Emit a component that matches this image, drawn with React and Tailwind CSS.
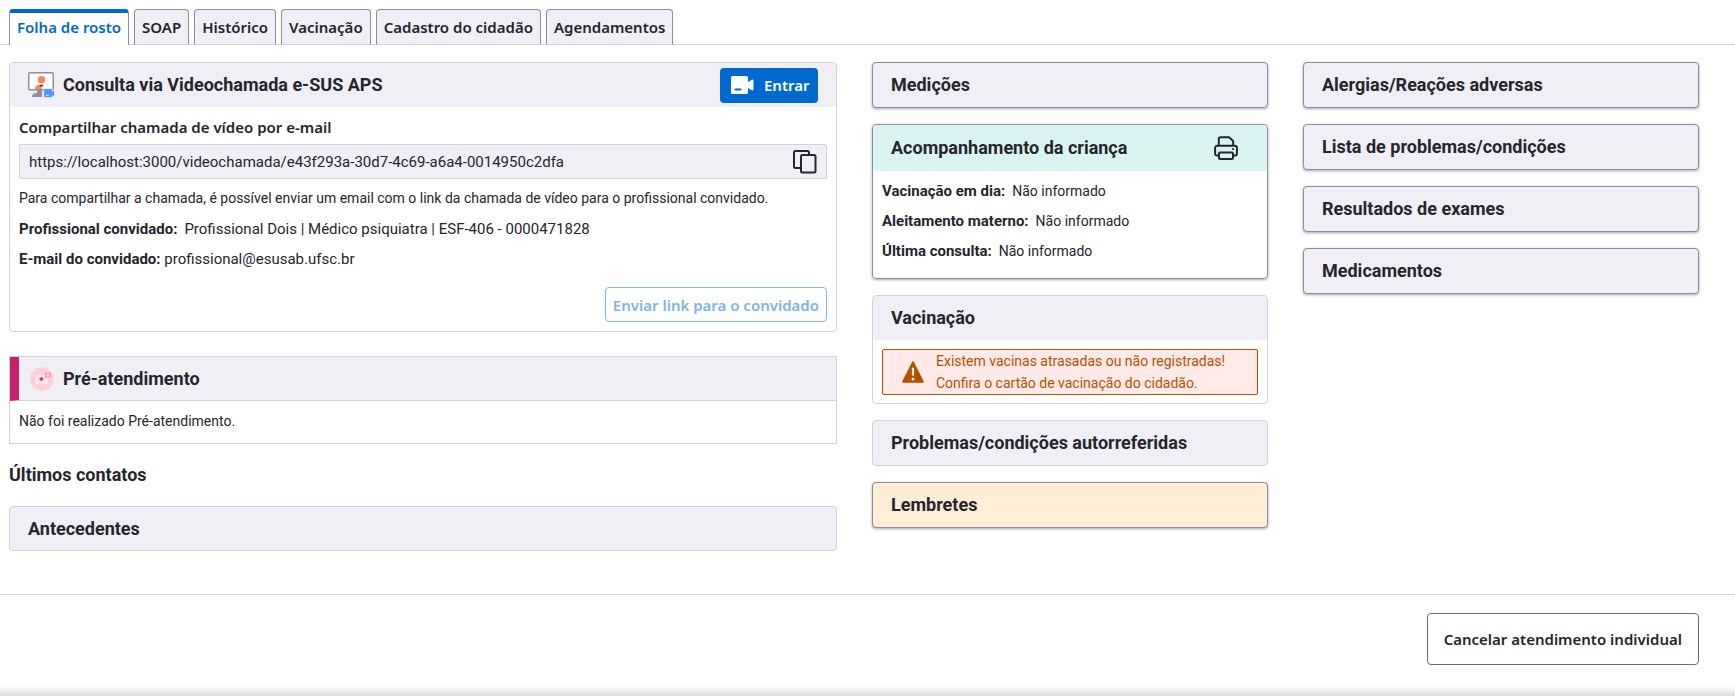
import React from "react";

const tabs = ["Folha de rosto", "SOAP", "Histórico", "Vacinação", "Cadastro do cidadão", "Agendamentos"];

const rightCards = ["Alergias/Reações adversas", "Lista de problemas/condições", "Resultados de exames", "Medicamentos"];

const childInfo = [
  ["Vacinação em dia:", "Não informado"],
  ["Aleitamento materno:", "Não informado"],
  ["Última consulta:", "Não informado"],
];

function Title({ children }) {
  return <h2 className="font-[Roboto,sans-serif] text-[18px] leading-6 font-bold">{children}</h2>;
}

function CardButton({ children, className = "bg-[#f0eff5]" }) {
  return (
    <button
      type="button"
      className={`flex h-[46px] items-center rounded border border-[#8b8ba3] px-[18px] text-left shadow-[0_1px_3px_rgba(0,0,0,0.35)] ${className}`}
    >
      <span className="font-[Roboto,sans-serif] text-[18px] leading-6 font-bold">{children}</span>
    </button>
  );
}

function MonitorIcon() {
  return (
    <svg width="26" height="26" viewBox="0 0 26 26" aria-hidden="true">
      <path d="M9 18h5v7H4c0-2.800 1.500-4 5-4z" fill="#8f8fa3" />
      <rect x="0.750" y="0.750" width="24.500" height="17" rx="1" fill="#fff" stroke="#8f8fa3" strokeWidth="1.500" />
      <circle cx="13.500" cy="7.800" r="3.700" fill="#ff8551" />
      <path d="M7 17c0-2.700 2-4.200 4.700-4.200h2v4.200z" fill="#ff8551" />
      <path d="M11.500 12.800h3.700v1.800h-3z" fill="#5b3a2c" />
      <rect x="15.800" y="16.700" width="8.400" height="8.800" rx="1.200" fill="#4a90ff" stroke="#fff" strokeWidth="0.500" />
      <path d="M23.500 20l2.500-1.200v5.400L23.500 23z" fill="#4a90ff" />
      <path d="M18 23.300h3" stroke="#fff" strokeWidth="0.900" />
    </svg>
  );
}

function CameraIcon() {
  return (
    <svg width="23" height="18" viewBox="0 0 23 18" aria-hidden="true">
      <path fill="#fff" fillRule="evenodd" d="M1.500 0h14A1.500 1.500 0 0 1 17 1.500V6l3.800-2.200c.8-.5 1.700 0 1.700.9v8.600c0 .9-.9 1.400-1.700.9L17 12v4.500a1.500 1.500 0 0 1-1.500 1.500h-14A1.500 1.500 0 0 1 0 16.500v-15A1.500 1.500 0 0 1 1.500 0zM4.500 12.500a1 1 0 0 0 0 2h5a1 1 0 0 0 0-2z" />
    </svg>
  );
}

function CopyIcon() {
  return (
    <svg width="24" height="24" viewBox="0 0 24 24" fill="none" stroke="#25252d" strokeWidth="2" strokeLinejoin="round" aria-hidden="true">
      <path d="M16 5V2.500A1.500 1.500 0 0 0 14.500 1h-12A1.500 1.500 0 0 0 1 2.500v14A1.500 1.500 0 0 0 2.500 18H7" />
      <rect x="8" y="5" width="14.500" height="17.500" rx="1.500" />
    </svg>
  );
}

function PrinterIcon() {
  return (
    <svg width="24" height="24" viewBox="0 0 24 24" fill="none" stroke="#25252d" strokeWidth="2" strokeLinejoin="round" aria-hidden="true">
      <path d="M4.800 9.500V3A1.800 1.800 0 0 1 6.600 1.200h8.400L19.200 5v4.500" />
      <path d="M5 19.500H2.800A1.700 1.700 0 0 1 1.100 17.800V12a2.300 2.300 0 0 1 2.300-2.300h17.200a2.300 2.300 0 0 1 2.300 2.300v5.800a1.700 1.700 0 0 1-1.700 1.700H19" />
      <rect x="5" y="16.500" width="14" height="6.500" rx="1" />
      <circle cx="19" cy="13" r="1.100" fill="#25252d" stroke="none" />
    </svg>
  );
}

function KitIcon() {
  return (
    <svg width="24" height="24" viewBox="0 0 24 24" aria-hidden="true">
      <circle cx="12" cy="12" r="11.800" fill="#ffcfda" />
      <rect x="5" y="8" width="13" height="9" rx="1.200" fill="#ffe6ec" />
      <path d="M11.400 10v4M9.400 12h4" stroke="#c81e6e" strokeWidth="1.400" />
      <path d="M15 5.500h6v5h-4.500L15 12z" fill="#ff9cba" />
      <path d="M18 6.700v2.800M16.600 8.100h2.800" stroke="#fff" strokeWidth="0.900" />
    </svg>
  );
}

function WarningIcon() {
  return (
    <svg width="22" height="22" viewBox="0 0 22 22" aria-hidden="true">
      <path d="M11 .3c.4 0 .7.200.9.600l9.900 19.500c.3.700-.1 1.400-.9 1.400H1.100c-.8 0-1.200-.7-.9-1.400L10.100.9c.2-.4.5-.6.9-.6z" fill="#b35000" />
      <path d="M11 7.500v6.200" stroke="#ffeae7" strokeWidth="2.200" strokeLinecap="round" />
      <circle cx="11" cy="18" r="1.500" fill="#ffeae7" />
    </svg>
  );
}

export default function App() {
  return (
    <div className="flex min-h-screen flex-col bg-white font-[Roboto,sans-serif] text-[14px] leading-5 text-[#25252d]">
      <nav className="border-b border-[#d2d2de] pt-[9px] pl-[9px]">
        <div role="tablist" className="-mb-px flex gap-[5px] font-['Noto_Sans',sans-serif] text-[15px] leading-[18px] font-semibold">
          {tabs.map((tab, i) => (
            <button
              key={tab}
              type="button"
              role="tab"
              aria-selected={i === 0}
              className={
                i === 0
                  ? "h-9 rounded-t border-x border-t-4 border-x-[#8b8ba3] border-t-[#0069d0] bg-white px-[7px] pb-1 text-[#0069d0]"
                  : "h-9 rounded-t border border-[#8b8ba3] border-b-[#d2d2de] bg-[#f0eff5] px-[7px]"
              }
            >
              {tab}
            </button>
          ))}
        </div>
      </nav>

      <main className="grid grid-cols-[828fr_396fr_396fr] items-start gap-[35px] pt-[17px] pr-9 pl-[9px]">
        <div className="flex min-w-0 flex-col">
          <section className="rounded border border-[#d2d2de]">
            <header className="flex h-11 items-center rounded bg-[#f0eff5] px-[18px]">
              <MonitorIcon />
              <div className="ml-[9px] grow">
                <Title>Consulta via Videochamada e-SUS APS</Title>
              </div>
              <button
                type="button"
                className="flex h-[35px] w-[98px] items-center gap-[10px] rounded bg-[#0069d0] pl-[11px] font-['Noto_Sans',sans-serif] text-[15px] font-semibold text-white"
              >
                <CameraIcon />
                Entrar
              </button>
            </header>
            <div className="px-[9px] pt-[10px] pb-[9px]">
              <label htmlFor="link" className="block font-['Noto_Sans',sans-serif] text-[15px] font-semibold">
                Compartilhar chamada de vídeo por e-mail
              </label>
              <div className="mt-[7px] flex h-[35px] items-center rounded-xs border border-[#d2d2de] bg-[#f0eff5] px-[9px]">
                <input
                  id="link"
                  readOnly
                  value="https://localhost:3000/videochamada/e43f293a-30d7-4c69-a6a4-0014950c2dfa"
                  className="min-w-0 grow bg-transparent text-[15px] outline-none"
                />
                <button type="button" aria-label="Copiar link">
                  <CopyIcon />
                </button>
              </div>
              <p className="mt-[9px]">
                Para compartilhar a chamada, é possível enviar um email com o link da chamada de vídeo para o profissional convidado.
              </p>
              <p className="mt-[11px] text-[15px]">
                <strong className="mr-[7px]">Profissional convidado:</strong>Profissional Dois | Médico psiquiatra | ESF-406 - 0000471828
              </p>
              <p className="mt-[10px] text-[15px]">
                <strong>E-mail do convidado:</strong> profissional@esusab.ufsc.br
              </p>
              <div className="mt-[18px] flex justify-end">
                <button
                  type="button"
                  disabled
                  className="h-[35px] rounded border border-[#7fb4e8] px-[7px] font-['Noto_Sans',sans-serif] text-[15px] font-semibold text-[#7fb4e8]"
                >
                  Enviar link para o convidado
                </button>
              </div>
            </div>
          </section>

          <section className="mt-6 border border-[#d2d2de]">
            <header className="flex h-11 items-center border-b border-l-[9px] border-b-[#d2d2de] border-l-[#c81e6e] bg-[#f0eff5] pl-[11px]">
              <KitIcon />
              <div className="ml-[9px]">
                <Title>Pré-atendimento</Title>
              </div>
            </header>
            <p className="px-[9px] pt-[10px] pb-3">Não foi realizado Pré-atendimento.</p>
          </section>

          <div className="mt-[19px]">
            <Title>Últimos contatos</Title>
          </div>

          <section className="mt-[19px] flex h-[45px] items-center rounded border border-[#d2d2de] bg-[#f0eff5] px-[18px]">
            <Title>Antecedentes</Title>
          </section>
        </div>

        <div className="flex min-w-0 flex-col gap-4">
          <CardButton>Medições</CardButton>

          <section className="rounded border border-[#8b8ba3] pb-[17px] shadow-[0_1px_3px_rgba(0,0,0,0.35)]">
            <header className="flex h-[46px] items-center justify-between rounded bg-[#daf5f1] pr-[29px] pl-[18px]">
              <Title>Acompanhamento da criança</Title>
              <button type="button" aria-label="Imprimir">
                <PrinterIcon />
              </button>
            </header>
            <div className="flex flex-col gap-[10px] px-[9px] pt-[10px]">
              {childInfo.map(([label, value]) => (
                <p key={label}>
                  <strong className="mr-[7px] text-[15px] leading-5">{label}</strong>
                  {value}
                </p>
              ))}
            </div>
          </section>

          <section className="rounded border border-[#d2d2de]">
            <header className="flex h-11 items-center rounded bg-[#f0eff5] px-[18px]">
              <Title>Vacinação</Title>
            </header>
            <div role="alert" className="mx-[9px] mt-[9px] mb-2 flex items-center gap-3 rounded-xs border border-[#b35000] bg-[#ffeae7] pl-[19px] text-[#b35000]">
              <WarningIcon />
              <p className="leading-[22px]">
                Existem vacinas atrasadas ou não registradas!
                <br />
                Confira o cartão de vacinação do cidadão.
              </p>
            </div>
          </section>

          <section className="flex h-[46px] items-center rounded border border-[#d2d2de] bg-[#f0eff5] px-[18px]">
            <Title>Problemas/condições autorreferidas</Title>
          </section>

          <CardButton className="bg-[#ffedd5]">Lembretes</CardButton>
        </div>

        <div className="flex min-w-0 flex-col gap-4">
          {rightCards.map((card) => (
            <CardButton key={card}>{card}</CardButton>
          ))}
        </div>
      </main>

      <footer className="mt-[43px] flex justify-end border-t border-[#d2d2de] pt-[18px] pr-9">
        <button
          type="button"
          className="h-[52px] rounded border border-[#6b6b80] px-4 font-['Noto_Sans',sans-serif] text-[15px] font-semibold"
        >
          Cancelar atendimento individual
        </button>
      </footer>
      <div className="mt-auto h-[10px] bg-linear-to-b from-white to-[#dcdcdc]" />
    </div>
  );
}
